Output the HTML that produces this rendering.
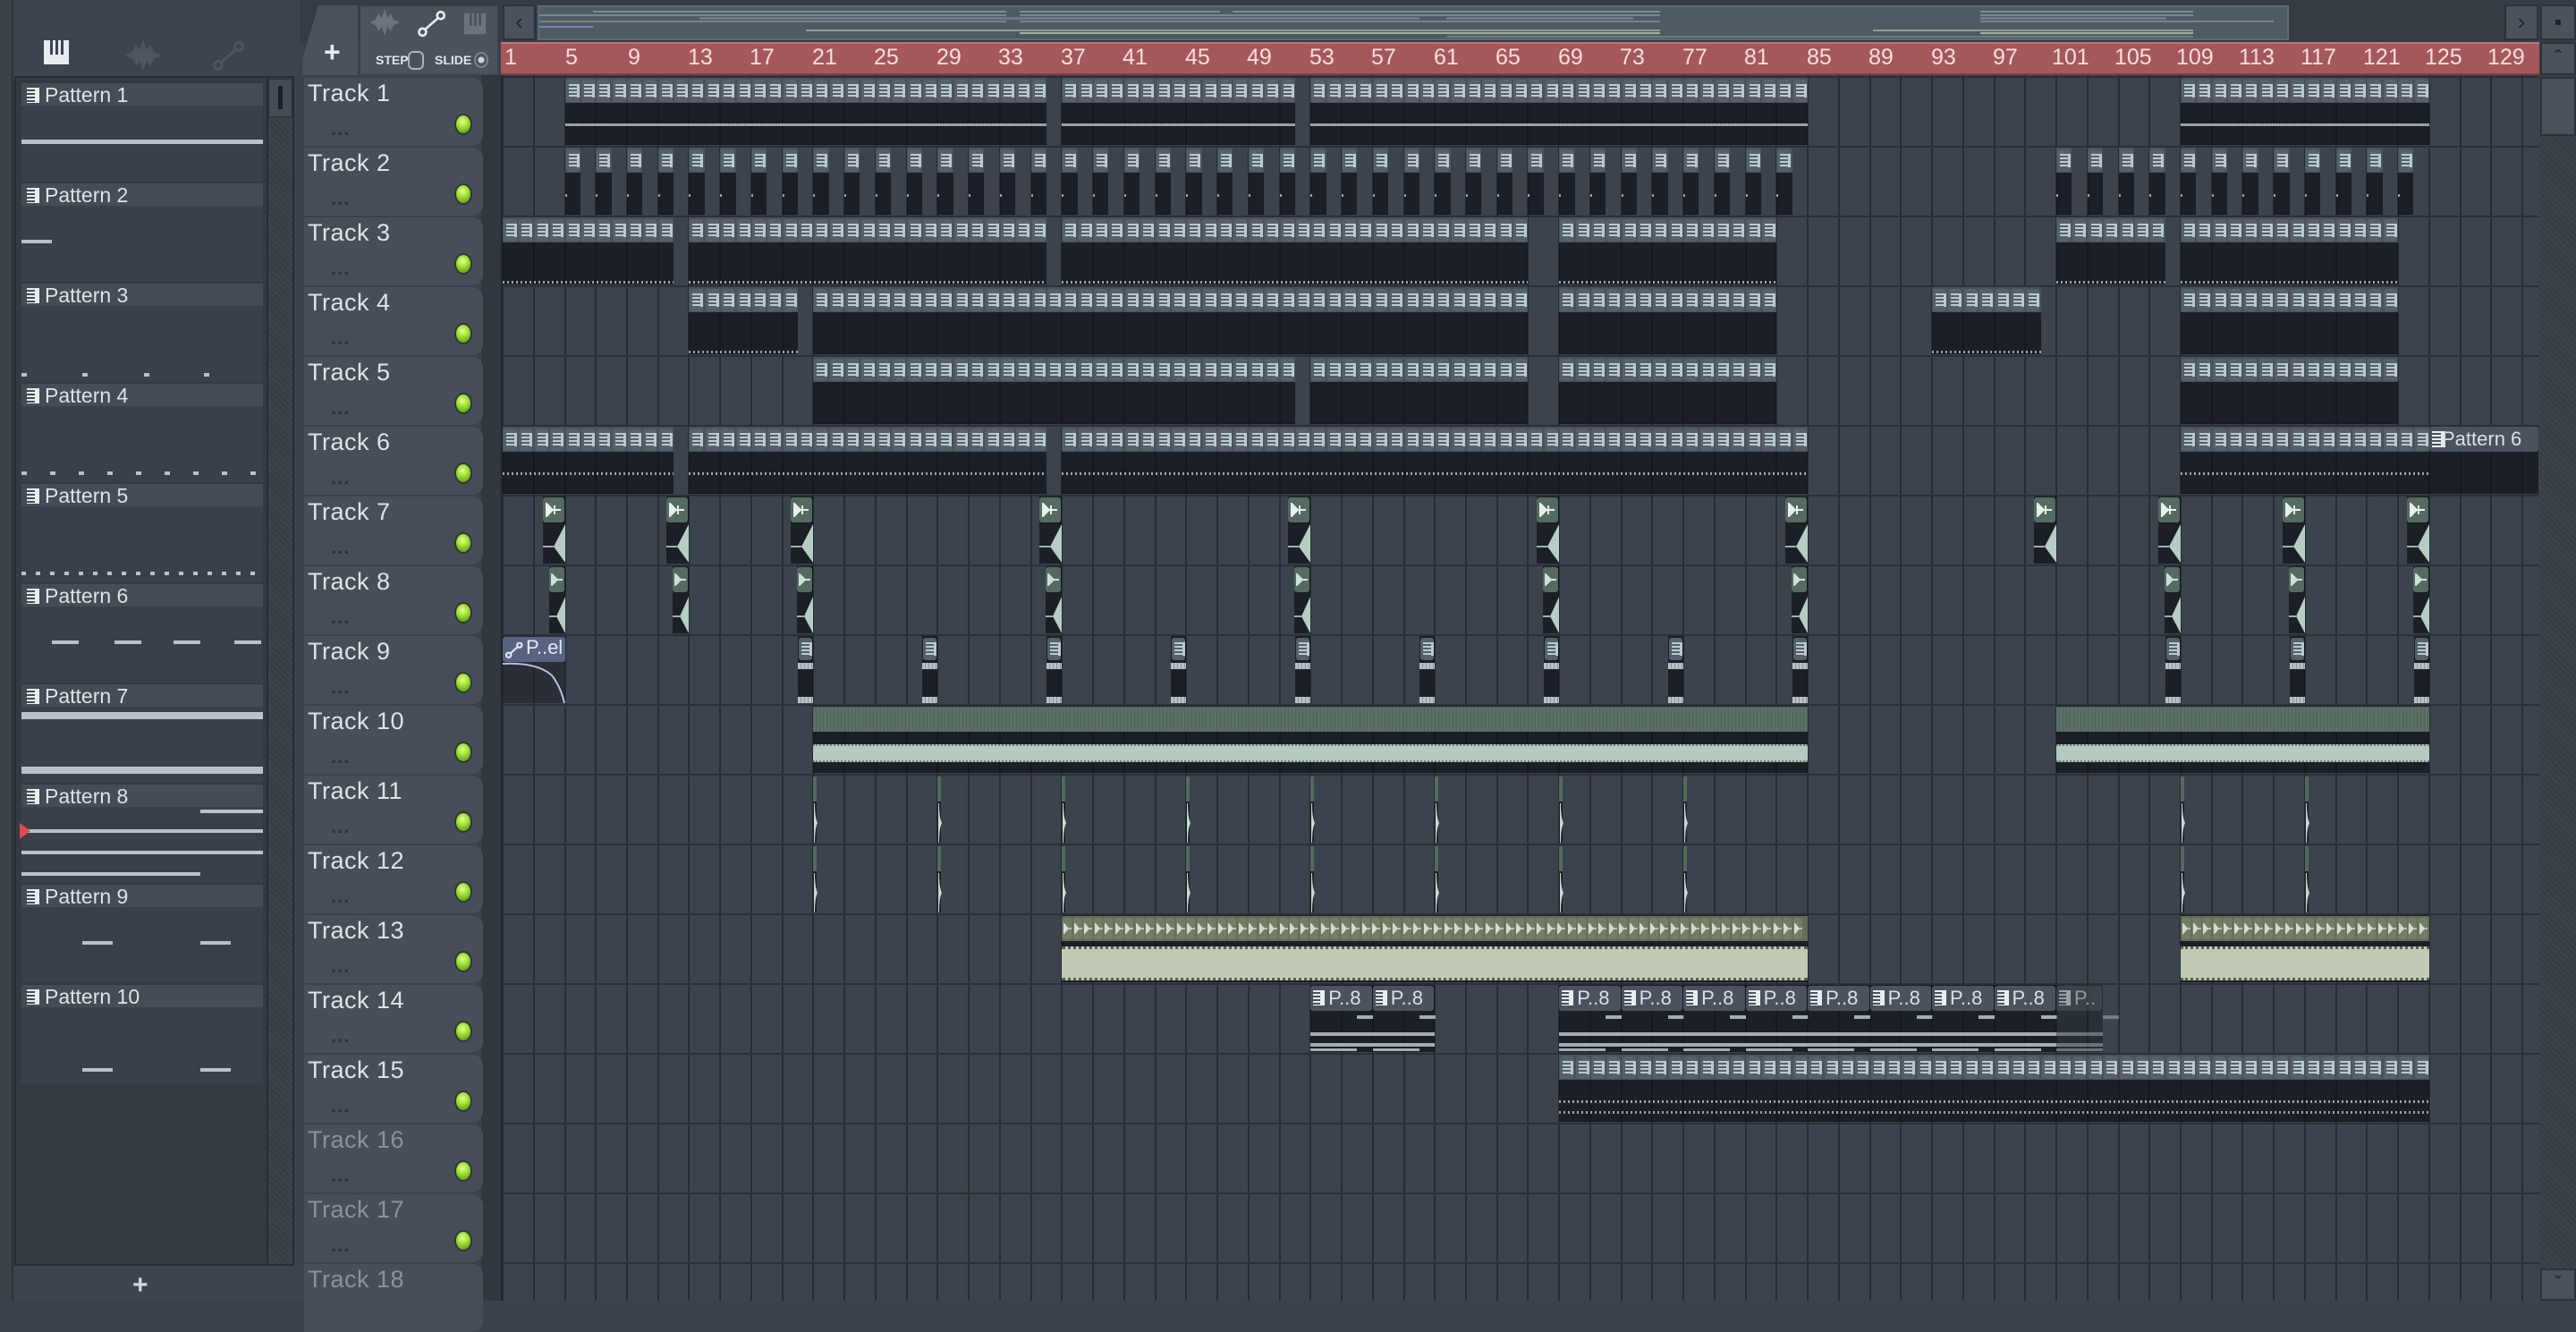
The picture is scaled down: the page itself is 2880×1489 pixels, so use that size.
<!DOCTYPE html>
<html><head><meta charset="utf-8">
<style>
*{box-sizing:border-box;margin:0;padding:0}
body{width:2880px;height:1454px;overflow:hidden;position:relative;background:#3a424b;font-family:"Liberation Sans Narrow","Liberation Sans",sans-serif}
.a{position:absolute}
.tk{position:absolute;left:340px;width:200px;height:76px;background:#464e57;border-radius:0 12px 12px 0}
.tk .l{position:absolute;left:4px;top:2px;font-size:27px;color:#dde3e6;letter-spacing:.5px}
.tk .d{position:absolute;left:30px;top:44px;font-size:22px;font-weight:bold;color:#2c323a;letter-spacing:1px}
.tk .g{position:absolute;left:168px;top:40px;width:20px;height:24px;border-radius:50%;background:radial-gradient(circle at 45% 35%,#e6ff9a 0,#9fe030 40%,#5a9a12 90%);border:2px solid #2f363d}
.dim .l{color:#8a939a}
.pi{position:absolute;left:24px;width:270px;height:26px;background:#444c55;border-bottom:1px solid #3a4149}
.pi span{position:absolute;left:26px;top:0px;font-size:23px;color:#dde3e6}
.pi i{position:absolute;left:6px;top:5px;width:14px;height:17px;background:repeating-linear-gradient(#e8eef0 0 2px,transparent 2px 4px);border-right:5px solid #e8eef0}
.pb{position:absolute;left:24px;width:270px;height:84px;background:#394049}
.rn{position:absolute;top:50px;font-size:25px;color:#f6dfdb}
.t{position:absolute;height:25px;width:15px;border-radius:3px;background:#56606a}
.t::after{content:"";position:absolute;left:3px;top:5px;width:9px;height:15px;background:repeating-linear-gradient(#bcc8cf 0 2px,transparent 2px 4px);border-right:3px solid #bcc8cf}
.lab{position:absolute;font-size:22px;color:#d9e0e4;white-space:nowrap}
</style></head><body>

<div class="a" style="left:0;top:0;width:15px;height:1454px;background:#394149;border-right:2px solid #2b3239"></div>
<div class="a" style="left:15px;top:0;width:320px;height:86px;background:#3c444d"></div>
<svg class="a" style="left:48px;top:44px" width="30" height="30" viewBox="0 0 30 30"><rect x="1" y="1" width="28" height="27" fill="#e6ecef"/><rect x="8" y="1" width="3" height="16" fill="#3c444d"/><rect x="14" y="1" width="3" height="16" fill="#3c444d"/><rect x="20" y="1" width="3" height="16" fill="#3c444d"/></svg>
<svg class="a" style="left:138px;top:44px" width="44" height="36" viewBox="0 0 44 36"><path d="M2 18 L10 14 L14 6 L18 12 L22 0 L26 12 L30 6 L34 14 L42 18 L34 22 L30 30 L26 24 L22 36 L18 24 L14 30 L10 22 Z" fill="#4d5660"/></svg>
<svg class="a" style="left:238px;top:46px" width="36" height="34" viewBox="0 0 36 34"><circle cx="6" cy="27" r="4.5" fill="none" stroke="#4d5660" stroke-width="3"/><circle cx="29" cy="6" r="4.5" fill="none" stroke="#4d5660" stroke-width="3"/><line x1="9" y1="24" x2="26" y2="9" stroke="#4d5660" stroke-width="3"/></svg>

<div class="a" style="left:16px;top:85px;width:313px;height:1330px;background:#333a42;border:2px solid #262c32"></div>
<div class="a" style="left:298px;top:87px;width:29px;height:1326px;background:repeating-linear-gradient(45deg,#353c44 0 2px,#3c434b 2px 5px);border-left:2px solid #262c32"></div>
<div class="a" style="left:300px;top:88px;width:27px;height:43px;background:#444c55;border:1px solid #2a3037"></div>
<div class="a" style="left:311px;top:96px;width:5px;height:26px;background:#1c2025"></div>
<div class="a" style="left:15px;top:1415px;width:325px;height:39px;background:#3c444d"></div>
<div class="a" style="left:148px;top:1420px;font-size:30px;color:#d0d7db;font-weight:bold">+</div>

<div class="pi" style="top:93px"><i></i><span>Pattern 1</span></div><div class="pb" style="top:119px"></div>
<div class="pi" style="top:205px"><i></i><span>Pattern 2</span></div><div class="pb" style="top:231px"></div>
<div class="pi" style="top:317px"><i></i><span>Pattern 3</span></div><div class="pb" style="top:343px"></div>
<div class="pi" style="top:429px"><i></i><span>Pattern 4</span></div><div class="pb" style="top:455px"></div>
<div class="pi" style="top:541px"><i></i><span>Pattern 5</span></div><div class="pb" style="top:567px"></div>
<div class="pi" style="top:653px"><i></i><span>Pattern 6</span></div><div class="pb" style="top:679px"></div>
<div class="pi" style="top:765px"><i></i><span>Pattern 7</span></div><div class="pb" style="top:791px"></div>
<div class="pi" style="top:877px"><i></i><span>Pattern 8</span></div><div class="pb" style="top:903px"></div>
<div class="pi" style="top:989px"><i></i><span>Pattern 9</span></div><div class="pb" style="top:1015px"></div>
<div class="pi" style="top:1101px"><i></i><span>Pattern 10</span></div><div class="pb" style="top:1127px"></div>
<div id="pp"></div>

<div class="a" style="left:335px;top:0;width:2545px;height:47px;background:#353c44"></div>
<div class="a" style="left:338px;top:6px;width:62px;height:78px;background:#4a525b;border-radius:14px 0 0 0;clip-path:polygon(18px 0,100% 0,100% 100%,0 100%,0 60px)"></div>
<div class="a" style="left:362px;top:40px;font-size:32px;color:#e6ecef;font-weight:bold">+</div>
<div class="a" style="left:402px;top:6px;width:155px;height:78px;background:#4a525b;border:1px solid #3a4249"></div>
<svg class="a" style="left:410px;top:10px" width="40" height="30" viewBox="0 0 44 36"><path d="M2 18 L10 14 L14 6 L18 12 L22 0 L26 12 L30 6 L34 14 L42 18 L34 22 L30 30 L26 24 L22 36 L18 24 L14 30 L10 22 Z" fill="#6b747d"/></svg>
<svg class="a" style="left:467px;top:12px" width="32" height="30" viewBox="0 0 36 34"><circle cx="6" cy="27" r="4.5" fill="none" stroke="#e6ecef" stroke-width="3"/><circle cx="29" cy="6" r="4.5" fill="none" stroke="#e6ecef" stroke-width="3"/><line x1="9" y1="24" x2="26" y2="9" stroke="#e6ecef" stroke-width="3"/></svg>
<svg class="a" style="left:517px;top:14px" width="28" height="26" viewBox="0 0 30 30"><rect x="1" y="1" width="28" height="27" fill="#6b747d"/><rect x="8" y="1" width="3" height="16" fill="#4a525b"/><rect x="14" y="1" width="3" height="16" fill="#4a525b"/><rect x="20" y="1" width="3" height="16" fill="#4a525b"/></svg>
<div class="a" style="left:420px;top:59px;font-size:14px;color:#dfe5e8;font-weight:bold">STEP</div>
<div class="a" style="left:456px;top:57px;width:18px;height:21px;border:2px solid #aab3b9;border-radius:6px"></div>
<div class="a" style="left:486px;top:59px;font-size:14px;color:#dfe5e8;font-weight:bold">SLIDE</div>
<div class="a" style="left:530px;top:58px;width:16px;height:18px;border:2px solid #7b848b;border-radius:50%;background:radial-gradient(circle,#cfd6da 0 3px,transparent 4px)"></div>
<div class="a" style="left:562px;top:5px;width:37px;height:40px;background:#4a525b;border:2px solid #2c3238;color:#1f242a;font-size:26px;text-align:center;line-height:34px">&#8249;</div>
<div class="a" style="left:601px;top:6px;width:1958px;height:39px;background:#4f5b62;border:2px solid #5e6a72"></div>
<div id="ov"></div>
<div class="a" style="left:2800px;top:5px;width:38px;height:40px;background:#4a525b;border:2px solid #2c3238;color:#1f242a;font-size:26px;text-align:center;line-height:34px">&#8250;</div>
<div class="a" style="left:2840px;top:5px;width:40px;height:40px;background:#4a525b;border:2px solid #2c3238"></div>
<div class="a" style="left:2857px;top:22px;width:6px;height:6px;background:#1f242a"></div>

<div class="a" style="left:560px;top:47px;width:2279px;height:37px;background:#a5585c;border-top:2px solid #c07478;border-bottom:2px solid #7e3f43"></div>

<div class="a" style="left:2839px;top:47px;width:41px;height:1407px;background:repeating-linear-gradient(45deg,#353c44 0 2px,#3c434b 2px 5px)"></div>
<div class="a" style="left:2840px;top:47px;width:40px;height:37px;background:#4a525b;border:2px solid #2c3238;color:#1f242a;font-size:24px;text-align:center;line-height:34px">&#710;</div>
<div class="a" style="left:2840px;top:86px;width:40px;height:66px;background:#4a525b;border:2px solid #2c3238"></div>
<div class="a" style="left:2840px;top:1418px;width:40px;height:36px;background:#4a525b;border:2px solid #2c3238;color:#1f242a;font-size:22px;text-align:center;line-height:30px">&#711;</div>

<div class="a" style="left:538px;top:84px;width:24px;height:1370px;background:#2f373f;border-right:2px solid #20262c"></div>
<div id="grid" class="a" style="left:562px;top:84px;width:2277px;height:1370px;background:#3b434c;overflow:hidden"></div>
<div id="clips"></div>

<div class="tk" style="top:87px"><div class="l">Track 1</div><div class="d">...</div><div class="g"></div></div>
<div class="tk" style="top:165px"><div class="l">Track 2</div><div class="d">...</div><div class="g"></div></div>
<div class="tk" style="top:243px"><div class="l">Track 3</div><div class="d">...</div><div class="g"></div></div>
<div class="tk" style="top:321px"><div class="l">Track 4</div><div class="d">...</div><div class="g"></div></div>
<div class="tk" style="top:399px"><div class="l">Track 5</div><div class="d">...</div><div class="g"></div></div>
<div class="tk" style="top:477px"><div class="l">Track 6</div><div class="d">...</div><div class="g"></div></div>
<div class="tk" style="top:555px"><div class="l">Track 7</div><div class="d">...</div><div class="g"></div></div>
<div class="tk" style="top:633px"><div class="l">Track 8</div><div class="d">...</div><div class="g"></div></div>
<div class="tk" style="top:711px"><div class="l">Track 9</div><div class="d">...</div><div class="g"></div></div>
<div class="tk" style="top:789px"><div class="l">Track 10</div><div class="d">...</div><div class="g"></div></div>
<div class="tk" style="top:867px"><div class="l">Track 11</div><div class="d">...</div><div class="g"></div></div>
<div class="tk" style="top:945px"><div class="l">Track 12</div><div class="d">...</div><div class="g"></div></div>
<div class="tk" style="top:1023px"><div class="l">Track 13</div><div class="d">...</div><div class="g"></div></div>
<div class="tk" style="top:1101px"><div class="l">Track 14</div><div class="d">...</div><div class="g"></div></div>
<div class="tk" style="top:1179px"><div class="l">Track 15</div><div class="d">...</div><div class="g"></div></div>
<div class="tk dim" style="top:1257px"><div class="l">Track 16</div><div class="d">...</div><div class="g"></div></div>
<div class="tk dim" style="top:1335px"><div class="l">Track 17</div><div class="d">...</div><div class="g"></div></div>
<div class="tk dim" style="top:1413px"><div class="l">Track 18</div></div>

<div class="rn" style="left:564px">1</div><div class="rn" style="left:632px">5</div><div class="rn" style="left:702px">9</div><div class="rn" style="left:769px">13</div><div class="rn" style="left:838px">17</div><div class="rn" style="left:908px">21</div><div class="rn" style="left:977px">25</div><div class="rn" style="left:1047px">29</div><div class="rn" style="left:1116px">33</div><div class="rn" style="left:1186px">37</div><div class="rn" style="left:1255px">41</div><div class="rn" style="left:1325px">45</div><div class="rn" style="left:1394px">49</div><div class="rn" style="left:1464px">53</div><div class="rn" style="left:1533px">57</div><div class="rn" style="left:1603px">61</div><div class="rn" style="left:1672px">65</div><div class="rn" style="left:1742px">69</div><div class="rn" style="left:1811px">73</div><div class="rn" style="left:1881px">77</div><div class="rn" style="left:1950px">81</div><div class="rn" style="left:2020px">85</div><div class="rn" style="left:2089px">89</div><div class="rn" style="left:2159px">93</div><div class="rn" style="left:2228px">97</div><div class="rn" style="left:2294px">101</div><div class="rn" style="left:2364px">105</div><div class="rn" style="left:2433px">109</div><div class="rn" style="left:2503px">113</div><div class="rn" style="left:2572px">117</div><div class="rn" style="left:2642px">121</div><div class="rn" style="left:2711px">125</div><div class="rn" style="left:2781px">129</div>

<div id="labs">
<div class="lab" style="left:2730px;top:478px">Pattern 6</div>
<div class="lab" style="left:588px;top:711px;color:#e4e8f4">P..el</div>
</div>

<script>
var BW=17.37,X0=562,RT=86,RH=78;
function bx(b){return X0+(b-1)*BW}
function ry(t){return RT+(t-1)*RH}
var H=[];
function d(x,y,w,h,st){H.push('<div class="a" style="left:'+x.toFixed(1)+'px;top:'+y.toFixed(1)+'px;width:'+w.toFixed(1)+'px;height:'+h.toFixed(1)+'px;'+(st||'')+'"></div>')}
var g=[];
for(var b=1;b<=133;b+=2){g.push('<div class="a" style="left:'+((b-1)*BW-1).toFixed(1)+'px;top:0;width:2px;height:1370px;background:#262c33"></div>')}
for(var t=1;t<=18;t++){g.push('<div class="a" style="left:0;top:'+(ry(t)-84-1)+'px;width:2300px;height:2px;background:#2a3037"></div>')}
document.getElementById('grid').innerHTML=g.join('');
var BODY='background:rgba(15,18,23,.72);';
function pat(t,s,e,opt){opt=opt||{};var y=ry(t);
 d(bx(s),y+1,(e-s)*BW,75,BODY+'border-bottom:1px solid #15191e');
 d(bx(s),y+1,(e-s)*BW,28,'background:#4a535d');
 for(var b=s;b<e;b++){H.push('<div class="t" style="left:'+(bx(b)+1).toFixed(1)+'px;top:'+(y+3)+'px"></div>')}
 if(opt.line)d(bx(s),y+opt.line,(e-s)*BW,3,'background:repeating-linear-gradient(90deg,#a2abb2 0 2px,#8a939a 2px 3px)');
 if(opt.dots)d(bx(s),y+opt.dots,(e-s)*BW,3,'background:repeating-linear-gradient(90deg,#9aa3aa 0 2px,transparent 2px 5px)');
 if(opt.dots2)d(bx(s),y+opt.dots2,(e-s)*BW,3,'background:repeating-linear-gradient(90deg,#9aa3aa 0 2px,transparent 2px 5px)');
}
[[5,36],[37,52],[53,85],[109,125]].forEach(function(r){pat(1,r[0],r[1],{line:52})});
for(var b=5;b<=83;b+=2){pat(2,b,b+1);d(bx(b),ry(2)+53,2,3,'background:#9aa3aa')}
for(var b=101;b<=123;b+=2){pat(2,b,b+1);d(bx(b),ry(2)+53,2,3,'background:#9aa3aa')}
[[1,12],[13,36],[37,67],[69,83],[101,108],[109,123]].forEach(function(r){pat(3,r[0],r[1],{dots:72})});
[[13,20],[21,67],[69,83],[93,100],[109,123]].forEach(function(r){pat(4,r[0],r[1])});
d(bx(13),ry(4)+72,7*BW,3,'background:repeating-linear-gradient(90deg,#9aa3aa 0 2px,transparent 2px 5px)');
d(bx(93),ry(4)+72,7*BW,3,'background:repeating-linear-gradient(90deg,#9aa3aa 0 2px,transparent 2px 5px)');
[[21,52],[53,67],[69,83],[109,123]].forEach(function(r){pat(5,r[0],r[1])});
[[1,12],[13,36],[37,85],[109,125]].forEach(function(r){pat(6,r[0],r[1],{dots:52})});
(function(){var y=ry(6);d(bx(125),y+1,2838-bx(125),75,BODY);d(bx(125),y+1,2838-bx(125),28,'background:#4a535d;border-radius:3px');
 H.push('<div class="a" style="left:'+(bx(125)+3).toFixed(1)+'px;top:'+(y+6)+'px;width:15px;height:18px;background:repeating-linear-gradient(#e8eef0 0 2px,transparent 2px 4px);border-right:5px solid #e8eef0"></div>')})();
pat(15,69,125,{dots:52,dots2:64});
var ends=[5,13,21,37,53,69,85,101,109,117,125];
ends.forEach(function(e){
 var x2=bx(e),y=ry(7);
 d(x2-25,y+1,25,75,BODY);d(x2-25,y+2,24,28,'background:#556a60;border-radius:3px');
 H.push('<svg class="a" style="left:'+(x2-25).toFixed(1)+'px;top:'+(y+30)+'px" width="25" height="45"><line x1="0" y1="27" x2="12" y2="27" stroke="#cfe0d8" stroke-width="1.5"/><path d="M12 27 L25 2 L25 45 Z" fill="#b6cdc4"/></svg>');
 H.push('<svg class="a" style="left:'+(x2-22).toFixed(1)+'px;top:'+(y+8)+'px" width="18" height="16"><path d="M1 1 L1 15 L8 8 Z M8 8 L17 8 M10 3 L10 13" stroke="#e8f0ec" stroke-width="2" fill="#e8f0ec"/></svg>');
 if(e!=101){y=ry(8);
 d(x2-18,y+1,18,75,BODY);d(x2-18,y+2,17,28,'background:#556a60;border-radius:3px');
 H.push('<svg class="a" style="left:'+(x2-16).toFixed(1)+'px;top:'+(y+9)+'px" width="14" height="14"><path d="M1 1 L1 13 L7 7 Z M7 7 L13 7" stroke="#cfe0d8" stroke-width="2" fill="#cfe0d8"/></svg>');
 H.push('<svg class="a" style="left:'+(x2-18).toFixed(1)+'px;top:'+(y+32)+'px" width="18" height="44"><line x1="0" y1="25" x2="8" y2="25" stroke="#cfe0d8" stroke-width="1.5"/><path d="M8 25 L18 3 L18 44 Z" fill="#b6cdc4"/></svg>');}
});
(function(){var y=ry(9);d(bx(1),y+1,4*BW,75,'background:rgba(30,33,42,.6)');d(bx(1),y+2,4*BW,28,'background:#5a6282;border-radius:3px');
 H.push('<svg class="a" style="left:'+bx(1)+'px;top:'+(y+30)+'px" width="70" height="46"><path d="M0 2 Q38 0 55 15 Q65 28 69 46" fill="none" stroke="#b9bfdc" stroke-width="2"/></svg>');
 H.push('<svg class="a" style="left:565px;top:'+(y+8)+'px" width="20" height="18" viewBox="0 0 36 34"><circle cx="6" cy="27" r="5" fill="none" stroke="#e4e8f4" stroke-width="4"/><circle cx="29" cy="6" r="5" fill="none" stroke="#e4e8f4" stroke-width="4"/><line x1="9" y1="24" x2="26" y2="9" stroke="#e4e8f4" stroke-width="4"/></svg>');
 [21,29,37,45,53,61,69,77,85,109,117,125].forEach(function(e){var x=bx(e)-17;d(x,y+1,17,75,BODY);
  H.push('<div class="t" style="left:'+(x+1).toFixed(1)+'px;top:'+(y+3)+'px"></div>');
  d(x,y+31,17,7,'background:repeating-linear-gradient(90deg,#b8c1c6 0 3px,#8d969c 3px 4px)');
  d(x,y+69,17,7,'background:repeating-linear-gradient(90deg,#b8c1c6 0 3px,#8d969c 3px 4px)');});
})();
[[21,85],[101,125]].forEach(function(r){var y=ry(10),x=bx(r[0]),w=(r[1]-r[0])*BW;
 d(x,y+1,w,75,BODY);d(x,y+2,w,28,'background:repeating-linear-gradient(90deg,#5b6f64 0 3px,#51635a 3px 4px)');
 d(x,y+44,w,20,'background:#b4cac1;border-top:2px dotted #6c7f77;border-bottom:2px dotted #6c7f77');});
[21,29,37,45,53,61,69,77,109,117].forEach(function(b){[11,12].forEach(function(t){var y=ry(t),x=bx(b);
 d(x,y+2,4,28,'background:#56695f');d(x,y+30,4,46,'background:#1c2127');
 H.push('<svg class="a" style="left:'+x.toFixed(1)+'px;top:'+(y+32)+'px" width="6" height="44"><path d="M1 0 L1 44 L2 44 Q2 28 5 22 Q2 16 2 0 Z" fill="#c8dad2"/></svg>');});});
[[37,85],[109,125]].forEach(function(r){var y=ry(13),x=bx(r[0]),w=(r[1]-r[0])*BW;
 d(x,y+1,w,75,BODY);d(x,y+2,w,28,'background:#656e58');
 for(var xx=x;xx<x+w-8;xx+=11.5){H.push('<div class="a" style="left:'+(xx+1).toFixed(1)+'px;top:'+(y+4)+'px;width:10px;height:24px;border-radius:3px;background:#737d64"><svg class="a" style="left:1px;top:6px" width="9" height="12"><path d="M0 0 L0 12 L5 6 Z M5 6 L9 6" stroke="#d6dccc" stroke-width="1.5" fill="#d6dccc"/></svg></div>')}
 d(x,y+36,w,38,'background:#c2cab4;border-top:3px dotted #5a6250;border-bottom:3px dotted #5a6250');});
[53,57,69,73,77,81,85,89,93,97,101].forEach(function(b){var y=ry(14),x=bx(b),w=(b==101?3:4)*BW,op=b==101?'opacity:.55;':'';
 d(x,y+1,w,75,BODY+op);d(x,y+2,w-1,28,'background:#4a535d;border-radius:3px;'+op);
 H.push('<div class="a" style="left:'+(x+3).toFixed(1)+'px;top:'+(y+7)+'px;width:13px;height:17px;background:repeating-linear-gradient(#e8eef0 0 2px,transparent 2px 4px);border-right:5px solid #e8eef0;'+op+'"></div>');
 H.push('<div class="lab" style="left:'+(x+20).toFixed(1)+'px;top:'+(y+3)+'px;'+op+'">'+(b==101?'P..':'P..8')+'</div>');
 d(x+52,y+35,18,4,'background:#a4adb3;'+op);d(x,y+54,w,4,'background:#a4adb3;'+op);d(x,y+66,w,4,'background:#a4adb3;'+op);
 d(x,y+72,52,3,'background:#a4adb3;'+op);});
document.getElementById('clips').innerHTML=H.join('');
var O=[];function o(x,y,w,h,c){O.push('<div class="a" style="left:'+x+'px;top:'+y+'px;width:'+w+'px;height:'+h+'px;background:'+c+'"></div>')}
var ox=603,oscale=(2557-603)/(2838-562);
function ob(b){return Math.round(ox+(bx(b)-562)*oscale)}
[[5,36],[37,52],[53,85],[109,125]].forEach(function(r){o(ob(r[0]),12,ob(r[1])-ob(r[0]),2,'#7f8c93')});
[[1,36],[37,85],[109,125]].forEach(function(r){o(ob(r[0]),16,ob(r[1])-ob(r[0]),2,'#7a878e')});
[[13,67],[69,83],[109,123]].forEach(function(r){o(ob(r[0]),19,ob(r[1])-ob(r[0]),3,'#6f7b82')});
[[1,36],[37,85],[109,131]].forEach(function(r){o(ob(r[0]),23,ob(r[1])-ob(r[0]),2,'#77848b')});
o(ob(1),29,ob(5)-ob(1),2,'#7c84b4');
[[21,85],[101,125]].forEach(function(r){o(ob(r[0]),33,ob(r[1])-ob(r[0]),2,'#8ba397')});
[[37,85],[109,125]].forEach(function(r){o(ob(r[0]),36,ob(r[1])-ob(r[0]),2,'#a7b097')});
o(ob(69),40,ob(125)-ob(69),2,'#6f7b82');
document.getElementById('ov').innerHTML=O.join('');
var P=[];function p(x,y,w,h,c){P.push('<div class="a" style="left:'+x+'px;top:'+y+'px;width:'+w+'px;height:'+h+'px;background:'+(c||'#b9c2c6')+'"></div>')}
p(24,156,270,5);p(24,268,34,4);
[24,92,161,228].forEach(function(x){p(x,417,6,4)});
for(var x=24;x<290;x+=32)p(x,527,6,4);
for(var x=24;x<290;x+=16)p(x,639,5,4);
[58,128,194,262].forEach(function(x){p(x,716,30,4)});
p(24,796,270,8);p(24,857,270,8);
p(224,905,70,4);p(24,927,270,4);p(24,951,270,4);p(24,975,200,4);
P.push('<div class="a" style="left:22px;top:920px;width:0;height:0;border-top:9px solid transparent;border-bottom:9px solid transparent;border-left:12px solid #e0474f"></div>');
[92,224].forEach(function(x){p(x,1052,34,4);p(x,1194,34,4)});
document.getElementById('pp').innerHTML=P.join('');
</script>
</body></html>
